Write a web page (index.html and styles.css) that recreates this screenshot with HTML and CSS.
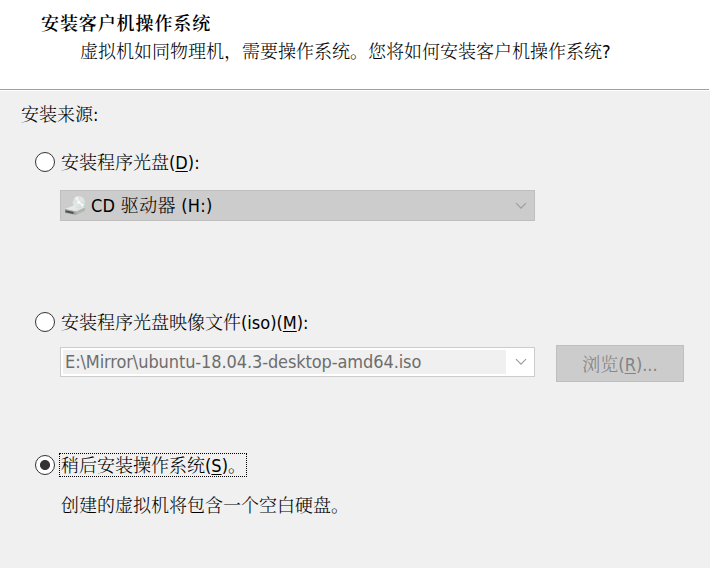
FILE: index.html
```html
<!DOCTYPE html>
<html lang="zh-CN">
<head>
<meta charset="utf-8">
<title>安装客户机操作系统</title>
<link rel="stylesheet" href="styles.css">
</head>
<body>
<header class="header">
  <h1 class="title">安装客户机操作系统</h1>
  <p class="subtitle">虚拟机如同物理机，需要操作系统。您将如何安装客户机操作系统<span class="latin">?</span></p>
</header>
<main class="content">
  <p class="source">安装来源<span class="latin">:</span></p>

  <section class="option option-disc">
    <div class="choice"><span class="radio"></span><span class="label">安装程序光盘<span class="latin">(<u>D</u>):</span></span></div>
    <div class="combo combo-disabled">
      <svg class="drive" viewBox="0 0 22 20">
        <defs>
          <linearGradient id="top" x1="0" y1="0" x2="1" y2="1"><stop offset="0" stop-color="#f0f0f0"/><stop offset="1" stop-color="#dcdedd"/></linearGradient>
          <linearGradient id="disc" x1="0" y1="0" x2="1" y2="1"><stop offset="0" stop-color="#d6dad8"/><stop offset=".5" stop-color="#e2e8e6"/><stop offset="1" stop-color="#c6d6d2"/></linearGradient>
        </defs>
        <path d="M1 13 10 9.500 21 11.500 12 15.500Z" fill="url(#top)"/>
        <path d="M1 13 12 15.500V19L1 17Z" fill="#a0a5a2"/>
        <path d="M1.500 14.200 9.500 16V18L1.500 16.300Z" fill="#46534b"/>
        <path d="M12 15.500 21 11.500V14.800L12 19Z" fill="#b2b5b3"/>
        <circle cx="14.800" cy="6.300" r="6.200" fill="url(#disc)"/>
        <path d="M14.800 6.300 10.500 2 13.500 .3ZM14.800 6.300 20.500 8.500 18 11.500Z" fill="#f8faf9" opacity=".8"/>
        <circle cx="14.800" cy="6.300" r="1.500" fill="#fafbfa"/>
      </svg>
      <span class="drive-name"><span class="latin">CD </span>驱动器<span class="latin"> (H:)</span></span>
      <svg class="chevron" viewBox="0 0 12 8"><path d="M1 1.200 6 6.200 11 1.200"/></svg>
    </div>
  </section>

  <section class="option option-iso">
    <div class="choice"><span class="radio"></span><span class="label">安装程序光盘映像文件<span class="latin">(iso)(<u>M</u>):</span></span></div>
    <div class="file-row">
      <div class="combo combo-edit">
        <span class="path latin">E:\Mirror\ubuntu-18.04.3-desktop-amd64.iso</span>
        <svg class="chevron" viewBox="0 0 12 8"><path d="M1 1.200 6 6.200 11 1.200"/></svg>
      </div>
      <div class="browse">浏览<span class="latin">(<u>R</u>)...</span></div>
    </div>
  </section>

  <section class="option option-later">
    <div class="choice"><span class="radio checked"></span><span class="label focused">稍后安装操作系统<span class="latin">(<u>S</u>)</span>。</span></div>
    <p class="note">创建的虚拟机将包含一个空白硬盘。</p>
  </section>
</main>
</body>
</html>
```
FILE: styles.css
```css
* { box-sizing: border-box; }
body {
  margin: 0;
  height: 568px;
  overflow: hidden;
  background: #f0f0f0;
  color: #000;
  font: 300 18px/24px "Noto Serif CJK SC", "Noto Sans CJK SC", serif;
  white-space: nowrap;
}
h1, p { margin: 0; }
u { text-decoration-thickness: 1px; text-underline-offset: 2px; }
.latin { font-family: "DejaVu Sans Condensed", "DejaVu Sans", sans-serif; font-stretch: condensed; font-weight: 400; line-height: 20px; white-space: pre; }
.header {
  height: 91px;
  padding: 10px 0 0 41px;
  background: linear-gradient(#a0a0a0, #a0a0a0) 0 89px / 709px 1px no-repeat #fff;
}
.title { font-size: 18px; font-weight: 600; letter-spacing: .9px; }
.subtitle { margin: 4px 0 0 39px; }
.content { padding-top: 10px; }
.source { margin-left: 21px; }
.option { padding-left: 35px; }
.option-disc { margin-top: 25px; }
.option-iso { margin-top: 89px; }
.option-later { margin-top: 71px; }
.choice { display: flex; align-items: center; height: 24px; }
.radio {
  flex: none;
  width: 20px;
  height: 20px;
  margin-right: 6px;
  border: 1px solid #333;
  border-radius: 50%;
  background: #fff;
}
.label { line-height: 22px; margin-top: -2px; }
.checked { background: radial-gradient(circle, #333 4.600px, #fff 5.400px); }
.focused { height: 24px; margin: 0 0 0 -2px; padding: 0 1px; width: 188px; line-height: 21px; border: 1px dotted #000; }
.combo { display: flex; align-items: center; width: 475px; border: 1px solid #bfbfbf; }
.combo-disabled { height: 31px; margin: 16px 0 0 25px; padding: 0 7px 0 3px; background: #ccc; }
.drive { width: 22px; height: 20px; margin-right: 5px; }
.drive-name { margin-top: -2px; line-height: 20px; letter-spacing: .3px; }
.chevron { width: 12px; height: 8px; margin-left: auto; fill: none; stroke: #9e9e9e; stroke-width: 1.2; }
.file-row { display: flex; align-items: flex-start; margin: 11px 0 0 25px; }
.combo-edit { height: 30px; margin-top: 2px; padding: 0 7px 0 2px; border-color: #ccc; background: #fff; }
.path { width: 443px; height: 24px; padding-left: 2px; background: #f0f0f0; color: #6d6d6d; line-height: 24px; letter-spacing: -.1px; }
.browse { width: 128px; height: 37px; margin-left: 21px; border: 1px solid #bfbfbf; background: #ccc; color: #838383; line-height: 34px; text-align: center; }
.note { margin: 15px 0 0 26px; }
```
